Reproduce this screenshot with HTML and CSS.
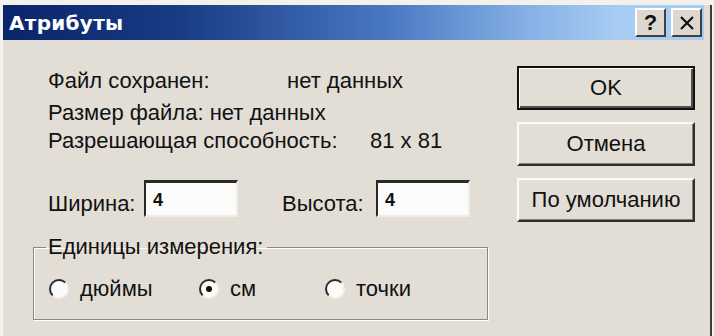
FILE: index.html
```html
<!DOCTYPE html>
<html lang="ru">
<head>
    <meta charset="UTF-8">
    <meta name="viewport" content="width=device-width, initial-scale=1.0">
    <title>Атрибуты</title>
    <link rel="stylesheet" href="styles.css">
</head>
<body>
    <div class="window">
        <div class="titlebar">
            <span class="title">Атрибуты</span>
            <div class="title-buttons">
                <button class="title-btn help">?</button>
                <button class="title-btn close">
                    <svg width="16" height="16" viewBox="0 0 16 16">
                        <path d="M2 2 L14 14 M14 2 L2 14" stroke="#111" stroke-width="2.2" fill="none"/>
                    </svg>
                </button>
            </div>
        </div>

        <div class="main">
            <div class="left">
                <div class="info">
                    <div class="row row1"><span class="label-saved">Файл сохранен:</span>нет данных</div>
                    <div class="row row2">Размер файла: нет данных</div>
                    <div class="row row3"><span class="label-res">Разрешающая способность:</span>81 x 81</div>

                    <div class="dims">
                        <span class="dim-label">Ширина:</span>
                        <div class="field">4</div>
                        <span class="dim-label second">Высота:</span>
                        <div class="field">4</div>
                    </div>
                </div>

                <fieldset class="units">
                    <legend>Единицы измерения:</legend>
                    <div class="radios">
                        <label class="radio-item r1"><span class="radio"></span>дюймы</label>
                        <label class="radio-item r2"><span class="radio checked"></span>см</label>
                        <label class="radio-item r3"><span class="radio"></span>точки</label>
                    </div>
                </fieldset>
            </div>

            <div class="buttons">
                <button class="btn default">OK</button>
                <button class="btn">Отмена</button>
                <button class="btn">По умолчанию</button>
            </div>
        </div>
    </div>
</body>
</html>
```

FILE: styles.css
```css
body {
    margin: 0;
    height: 336px;
    overflow: hidden;
    background-color: #f3f1ec;
    font-family: 'Liberation Sans', Arial, sans-serif;
    font-size: 22px;
    color: #111;
}
.window {
    margin: 5px 0 0 3px;
    width: 701px;
    height: 331px;
    padding-right: 6px;
    background-color: #e2ded6;
    border-right: 2px solid #3a3a3a;
}
/* Barra de título */
.titlebar {
    height: 35px;
    display: flex;
    align-items: center;
    justify-content: space-between;
    padding: 0 2px 0 6px;
    background: linear-gradient(90deg, #0a246a 0%, #173c84 25%, #4a78c2 55%, #86b1e6 75%, #a8cdf2 88%);
}
.title {
    color: #fff;
    font-family: 'DejaVu Sans', sans-serif;
    font-weight: bold;
    font-size: 20px;
    letter-spacing: 0.3px;
}
.title-buttons {
    display: flex;
    gap: 5px;
}
.title-btn {
    width: 31px;
    height: 29px;
    padding: 0;
    display: flex;
    align-items: center;
    justify-content: center;
    background-color: #dcd8d0;
    border: 2px solid;
    border-color: #fff #404040 #404040 #fff;
    font-family: 'Liberation Sans', Arial, sans-serif;
    font-weight: bold;
    font-size: 22px;
    color: #111;
}
/* Conteúdo */
.main {
    display: flex;
    padding: 24px 0 0 30px;
}
.left {
    width: 455px;
}
.info {
    padding-left: 15px;
}
.row {
    white-space: nowrap;
}
.row1 { line-height: 34px; }
.row2 { line-height: 30px; }
.row3 { line-height: 26px; }
.label-saved {
    display: inline-block;
    width: 239px;
}
.label-res {
    display: inline-block;
    width: 322px;
}
.dims {
    display: flex;
    align-items: flex-end;
    margin-top: 26px;
    height: 37px;
}
.dim-label {
    width: 96px;
    line-height: 26px;
}
.dim-label.second {
    width: 94px;
    margin-left: 44px;
}
.field {
    box-sizing: border-box;
    width: 94px;
    height: 37px;
    padding: 6px 0 0 7px;
    background-color: #fbfbf9;
    border-top: 3px solid #2a2a2a;
    border-left: 2px solid #2a2a2a;
    border-right: 2px solid #eeece8;
    border-bottom: 2px solid #eeece8;
    font-weight: bold;
    font-size: 18px;
    line-height: 22px;
}
/* Grupo de unidades */
.units {
    margin: 18px 0 0 0;
    padding: 0 0 18px 12px;
    border: 1px solid #8a8883;
    box-shadow: 1px 1px 0 #fff, inset 1px 1px 0 #fff;
    height: 65px;
}
.units legend {
    padding: 0 4px 0 2px;
    line-height: 24px;
}
.radios {
    display: flex;
    align-items: center;
    margin-top: 17px;
    line-height: 26px;
}
.radio-item {
    display: flex;
    align-items: center;
    gap: 11px;
}
.r1 { width: 150px; margin-left: 3px; }
.r2 { width: 126px; }
.radio {
    box-sizing: border-box;
    width: 20px;
    height: 20px;
    border-radius: 50%;
    border: 2px solid;
    border-color: #2a2a2a #f4f2ee #f4f2ee #2a2a2a;
    background-color: #fbfbf9;
    display: flex;
    align-items: center;
    justify-content: center;
}
.radio.checked::after {
    content: '';
    width: 6px;
    height: 6px;
    border-radius: 50%;
    background-color: #111;
}
/* Botões */
.buttons {
    display: flex;
    flex-direction: column;
    gap: 12px;
    margin: 2px 0 0 29px;
    width: 178px;
}
.btn {
    height: 44px;
    padding: 0;
    background-color: #e2ded6;
    border: 2px solid;
    border-color: #fbfaf7 #303030 #303030 #fbfaf7;
    box-shadow: inset -1px -1px 0 #808080;
    font-family: 'Liberation Sans', Arial, sans-serif;
    font-size: 22px;
    color: #111;
}
.btn.default {
    border: 2px solid #111;
    box-shadow: inset 1px 1px 0 #fff, inset -2px -2px 0 #505050;
}
```
